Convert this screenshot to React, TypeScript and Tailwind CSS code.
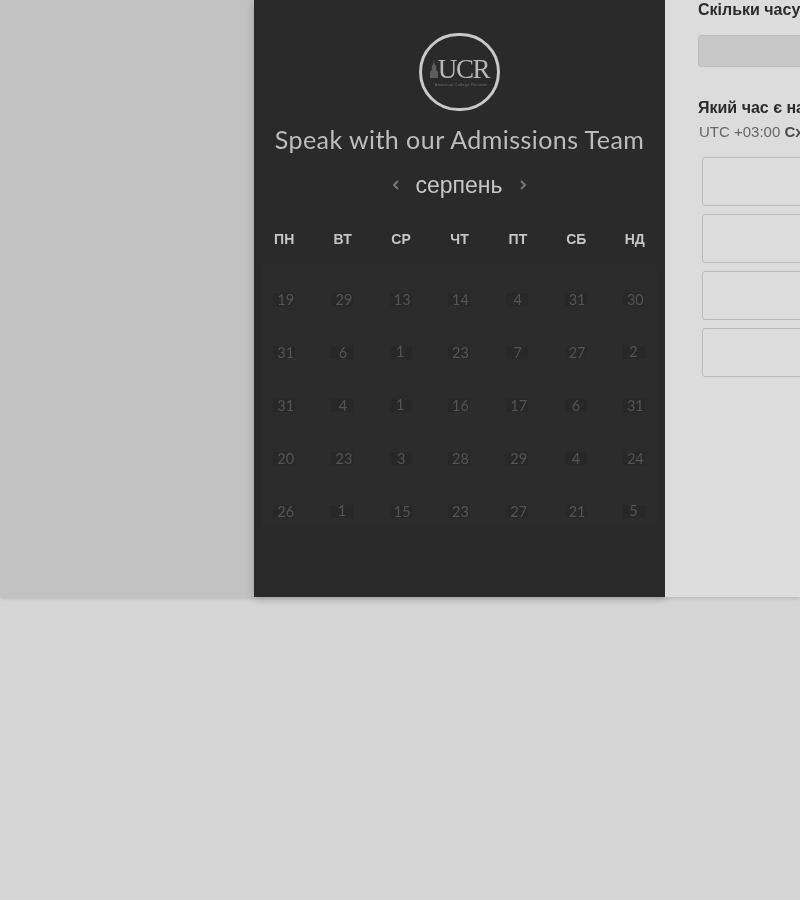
const weekdays = ["ПН", "ВТ", "СР", "ЧТ", "ПТ", "СБ", "НД"];

const weeks = [
  ["19", "29", "13", "14", "4", "31", "30"],
  ["31", "6", "1", "23", "7", "27", "2"],
  ["31", "4", "1", "16", "17", "6", "31"],
  ["20", "23", "3", "28", "29", "4", "24"],
  ["26", "1", "15", "23", "27", "21", "5"],
];

const slots = [0, 1, 2, 3];

function DayChip({ n }: { n: string }) {
  // 1, 2 and 5 sit a pixel higher in the picture
  const raised = n === "1" || n === "2" || n === "5";
  return (
    <span className="flex h-[13px] w-[22px] items-center justify-center bg-[#282828] font-['Lato',sans-serif] text-[14.5px] leading-[13px] text-[#555555]">
      <span className={n.length === 2 ? "pl-[3px]" : raised ? "-mt-[2px] pr-[1px]" : "pl-[1px]"}>{n}</span>
    </span>
  );
}

function Logo() {
  return (
    <div className="ml-[165px] flex h-[78px] w-[81px] flex-col items-center justify-center rounded-full border-[3px] border-[#c9c9c9]">
      <div className="flex items-end">
        <svg width="8" height="20" viewBox="0 0 9 20" className="mb-[2px] text-[#5c5c5c]">
          <path d="M4.5 0 L5.5 5 L7 7 L7 11 L9 13 L9 20 L0 20 L0 13 L2 11 L2 7 L3.5 5 Z" fill="currentColor" />
        </svg>
        <span className="font-['Liberation_Serif',serif] text-[27px] leading-[24px] tracking-[-1.4px] text-[#b8b8b8]">UCR</span>
      </div>
      <span className="mt-[1px] ml-[3px] h-[5px] w-[62px] overflow-hidden text-center font-['Liberation_Sans',sans-serif] text-[4px] leading-[5px] tracking-[0.2px] whitespace-nowrap text-[#6e6e6e]">
        American College Records
      </span>
    </div>
  );
}

function Calendar() {
  return (
    <div className="flex w-[411px] flex-col bg-[#2a2a2a] pt-[33px] shadow-[0_2px_8px_rgba(0,0,0,0.2)]">
      <Logo />
      <h1 className="mt-[13px] text-center font-['Lato',sans-serif] text-[25px] leading-[30px] font-normal tracking-[0.45px] whitespace-nowrap text-[#bdbdbd]">
        Speak with our Admissions Team
      </h1>
      <div className="mt-[17px] flex h-[28px] items-center justify-center">
        <svg width="8" height="12" viewBox="0 0 8 12" fill="none" stroke="#777777" strokeWidth="2" className="mr-[15px] -mt-[1px]">
          <path d="M6 2 L2 6 L6 10" />
        </svg>
        <span className="font-['Liberation_Sans',sans-serif] text-[23px] leading-[28px] text-[#c6c6c6]">серпень</span>
        <svg width="8" height="12" viewBox="0 0 8 12" fill="none" stroke="#777777" strokeWidth="2" className="ml-[16px] -mt-[1px]">
          <path d="M2 2 L6 6 L2 10" />
        </svg>
      </div>
      <div className="mt-[32px] ml-[1px] grid w-[409px] grid-cols-7">
        {weekdays.map((day) => (
          <div
            key={day}
            className="text-center font-['Liberation_Sans',sans-serif] text-[14px] leading-[16px] font-bold text-[#c6c6c6]"
          >
            {day}
          </div>
        ))}
      </div>
      <div className="mx-[8px] mt-[18px] h-[261px] bg-[#2c2c2c] pt-[8px]">
        {weeks.map((week, i) => (
          <div key={i} className="-ml-[7px] grid h-[53px] w-[408px] grid-cols-7 items-center">
            {week.map((n, j) => (
              <div key={j} className="flex justify-center">
                <DayChip n={n} />
              </div>
            ))}
          </div>
        ))}
      </div>
    </div>
  );
}

function TimePanel() {
  return (
    <div className="min-w-0 flex-1 overflow-hidden bg-[#dcdcdc] pl-[33px] font-['Liberation_Sans',sans-serif]">
      <div className="w-[500px]">
        <p className="mt-[1px] h-[18px] text-[16px] leading-[18px] font-bold text-[#2b2b2b]">Скільки часу вам потрібно?</p>
        <div className="mt-[16px] h-[32px] rounded-[3px] border border-[#bdbdbd] bg-[#c8c8c8]" />
        <p className="mt-[32px] text-[16px] leading-[18px] font-bold text-[#2b2b2b]">Який час є найкращим?</p>
        <p className="mt-[6px] ml-[1px] text-[15px] leading-[18px] text-[#666666]">
          UTC +03:00 <span className="font-bold text-[#4a4a4a]">Східний час</span>
        </p>
        <div className="mt-[16px] ml-[4px] flex flex-col gap-[8px]">
          {slots.map((s) => (
            <div key={s} className="h-[49px] rounded-[3px] border border-[#bababa] bg-[#dddddd]" />
          ))}
        </div>
      </div>
    </div>
  );
}

export default function App() {
  return (
    <div className="h-[900px] w-[800px] overflow-hidden bg-[#cccccc]">
      <div className="h-[900px] bg-[#d6d6d6] blur-[0.4px]">
        <div className="flex h-[597px] shadow-[0_1px_5px_rgba(0,0,0,0.18)]">
          <div className="w-[254px] bg-[#c2c2c2]" />
          <Calendar />
          <TimePanel />
        </div>
      </div>
    </div>
  );
}
